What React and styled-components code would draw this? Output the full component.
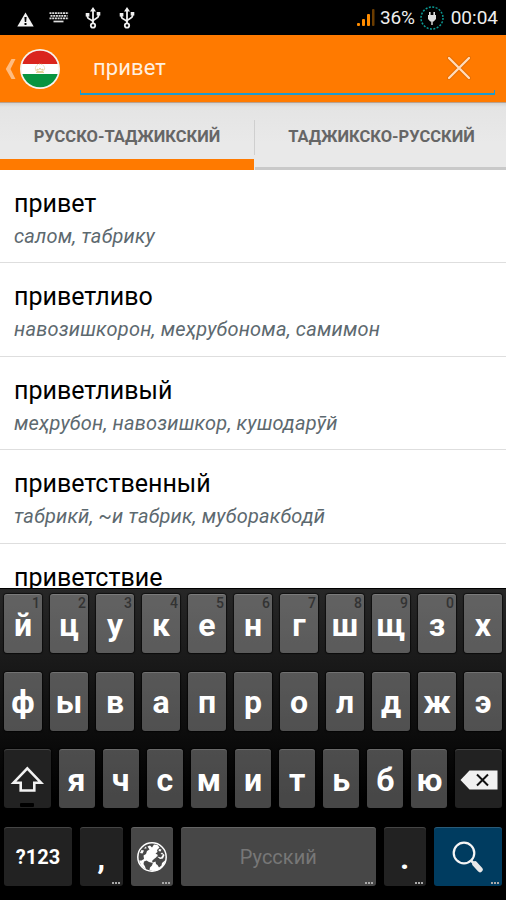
import styled, { createGlobalStyle } from "styled-components";

const GlobalStyle = createGlobalStyle`
  * {
    box-sizing: border-box;
  }

  body {
    margin: 0;
    background: #000000;
    font-family: Roboto, "Noto Sans", sans-serif;
  }
`;

const Screen = styled.div`
  display: flex;
  flex-direction: column;
  width: 506px;
  height: 900px;
  overflow: hidden;
  background: #ffffff;
`;

const StatusBar = styled.div`
  display: flex;
  align-items: center;
  flex: none;
  height: 35px;
  padding: 0 8px 0 17px;
  background: #000000;
`;

const StatusIcons = styled.div`
  display: flex;
  align-items: center;
  flex: 1;

  svg:nth-child(1) {
    margin: 3px 15px 0 0;
  }

  svg:nth-child(2) {
    margin-right: 16px;
  }

  svg:nth-child(3) {
    margin-right: 18px;
  }
`;

const Battery = styled.span`
  margin: 0 5px;
  font-size: 19px;
  line-height: 36px;
  letter-spacing: -0.2px;
  color: #eeeeee;
`;

const Clock = styled.span`
  margin-left: 7px;
  font-size: 19px;
  line-height: 36px;
  color: #eeeeee;
`;

const ActionBar = styled.div`
  display: flex;
  flex: none;
  height: 68px;
  padding: 0 11px 0 5px;
  background: #ff7a00;
  border-bottom: 1px solid #b9a08c;
`;

const UpButton = styled.div`
  display: flex;
  align-items: center;
  gap: 4px;
  width: 75px;
`;

const SearchField = styled.div`
  position: relative;
  display: flex;
  align-items: center;
  flex: 1;
  height: 60px;
  padding: 6px 24px 0 13px;
  justify-content: space-between;
`;

const Underline = styled.div`
  position: absolute;
  left: 0;
  right: 0;
  bottom: 0;
  height: 5px;
  border: 1px solid #1b9bd0;
  border-top: 0;
  border-bottom-width: 2px;
`;

const Query = styled.span`
  font-size: 22px;
  line-height: 54px;
  letter-spacing: 0.1px;
  color: #fff0e0;
`;

const Tabs = styled.div`
  display: flex;
  flex: none;
  height: 67px;
  background: linear-gradient(#d2d2d2, #e4e4e4 4px, #e9e9e9 40px);
`;

const Tab = styled.div`
  display: flex;
  align-items: center;
  justify-content: center;
  flex: ${(props) => (props.$active ? "0 0 254px" : "1")};
  padding-top: ${(props) => (props.$active ? "11px" : "3px")};
  padding-left: ${(props) => (props.$active ? "0" : "2px")};
  border-bottom: ${(props) =>
    props.$active ? "11px solid #ff7a00" : "3px solid #c9c9c9"};
  font-size: 16.5px;
  font-weight: 700;
  color: #666666;
`;

const TabDivider = styled.div`
  width: 1px;
  height: 64px;
  padding: 17px 0 12px;
  background: #cfcfcf content-box;
`;

const WordList = styled.div`
  flex: 1;
  min-height: 0;
  overflow: hidden;
`;

const WordRow = styled.div`
  height: 93.4px;
  padding: 18px 14px 0;
  border-bottom: 1px solid #dedede;
`;

const Word = styled.div`
  font-size: 25px;
  line-height: 31px;
  color: #000000;
`;

const Translation = styled.div`
  margin-top: 4.8px;
  font-size: 20px;
  line-height: 25px;
  letter-spacing: 0.2px;
  font-style: italic;
  color: #5d696f;
`;

const Keyboard = styled.div`
  display: flex;
  flex-direction: column;
  flex: none;
  gap: 18.5px;
  height: 312px;
  padding: 5px 4px 0;
  border-top: 1px solid #000000;
  background: linear-gradient(#272727, #000000 68%);
`;

const KeyRow = styled.div`
  display: flex;
  gap: 8px;
  height: 59px;
`;

const keyColors = {
  light: "rgba(255, 255, 255, 0.28)",
  dark: "#222222",
  action: "#003c60",
};

const Key = styled.div`
  position: relative;
  display: flex;
  align-items: center;
  justify-content: center;
  flex: ${(props) => (props.$width ? `0 0 ${props.$width}px` : "1 1 0")};
  min-width: 0;
  padding-top: 2px;
  border-radius: 3px;
  background: ${(props) => keyColors[props.$tone || "light"]};
  box-shadow: 0 0 1px 1px rgba(0, 0, 0, 0.6),
    inset 0 1px 0 rgba(255, 255, 255, 0.16);
  font-size: ${(props) => props.$size || 32}px;
  line-height: 28px;
  font-weight: 700;
  color: #ffffff;
`;

const Hint = styled.span`
  position: absolute;
  top: 3px;
  right: 2px;
  font-size: 14px;
  line-height: 12px;
  font-weight: 500;
  color: #333333;
`;

const More = styled.span`
  position: absolute;
  right: 3px;
  bottom: 2px;
  display: flex;
  gap: 1px;

  i {
    width: 2px;
    height: 2px;
    background: #a8a8a8;
  }
`;

const SpaceLabel = styled.span`
  font-size: 20px;
  font-weight: 400;
  color: #777777;
`;

const Punctuation = styled.span`
  padding-top: 1px;
`;

const words = [
  ["привет", "салом, табрику"],
  ["приветливо", "навозишкорон, меҳрубонома, самимон"],
  ["приветливый", "меҳрубон, навозишкор, кушодарӯй"],
  ["приветственный", "табрикӣ, ~и табрик, муборакбодӣ"],
  ["приветствие", ""],
];

const MoreDots = () => (
  <More>
    <i />
    <i />
    <i />
  </More>
);

const WarningIcon = () => (
  <svg width="17" height="15" viewBox="0 0 17 15">
    <path d="M8.5 0.5 16.7 14.5H0.3Z" fill="#f2f2f2" />
    <path d="M7.400 5h2.200l-.4 5H7.800zM7.500 11h2v2h-2z" fill="#000" />
  </svg>
);

const KeyboardIcon = () => (
  <svg width="20" height="11" viewBox="0 0 20 11">
    <g stroke="#dddddd" strokeWidth="1.7">
      <path d="M.5 1.2h19" strokeDasharray="2 .7" />
      <path d="M1.5 3.8h17" strokeDasharray="2 .7" />
      <path d="M.5 6.4h19" strokeDasharray="2 .7" />
      <path d="M4.5 9.5h10" />
    </g>
  </svg>
);

const UsbIcon = () => (
  <svg width="16" height="22" viewBox="0 0 16 22">
    <g fill="none" stroke="#f0f0f0" strokeWidth="1.8">
      <path d="M8 3v13M2.5 8v2c0 2.500 5.500 2.500 5.500 5M13.500 7v2c0 2.500-5.500 3-5.500 5.500" />
      <circle cx="8" cy="18.500" r="2.200" />
    </g>
    <path d="M8 0 11 4.500H5zM.7 6h3.700v3.500H.7zM11.700 5h3.600v3.600h-3.600z" fill="#f0f0f0" />
  </svg>
);

const SignalIcon = () => (
  <svg width="18" height="18" viewBox="0 0 18 18">
    <rect x="0" y="14" width="3" height="3" rx="1" fill="#ff8c00" />
    <rect x="5" y="10" width="3" height="7" rx="1" fill="#ff8c00" />
    <rect x="10" y="5" width="3" height="12" rx="1" fill="#ff8c00" />
    <rect x="15" y="0" width="2.500" height="17" rx="1" fill="#6b3c00" />
  </svg>
);

const PlugIcon = () => (
  <svg width="24" height="24" viewBox="0 0 24 24">
    <circle
      cx="12"
      cy="12"
      r="11"
      fill="none"
      stroke="#0b9c96"
      strokeWidth="1.500"
      strokeDasharray="2 1.450"
    />
    <path
      d="M9 6h1.600v3h2.800V6H15v3h1v4l-2.300 2.500h-1V19h-1.400v-3.500h-1L8 13V9h1z"
      fill="#dddddd"
    />
  </svg>
);

const BackIcon = () => (
  <svg width="11" height="20" viewBox="0 0 11 20">
    <path d="M6.500 0H10.500L5.500 10 10.500 20H6.500L.8 10Z" fill="#ffbc80" />
  </svg>
);

const FlagIcon = () => (
  <svg width="40" height="40" viewBox="0 0 40 40">
    <clipPath id="flag">
      <circle cx="20" cy="20" r="18.300" />
    </clipPath>
    <circle cx="20" cy="20" r="20" fill="#f7f3ef" />
    <g clipPath="url(#flag)">
      <path d="M0 0h40v15H0z" fill="#da251d" />
      <path d="M0 15h40v10H0z" fill="#ffffff" />
      <path d="M0 25h40v15H0z" fill="#079440" />
    </g>
    <path
      d="M16 23.500h8M17 22.500v-2.500l1.700 1 1.300-2 1.300 2 1.700-1v2.500z"
      fill="none"
      stroke="#dcc57f"
      strokeWidth=".8"
    />
    <path
      d="M15.800 21.500a4.600 4.600 0 1 1 8.400 0"
      fill="none"
      stroke="#dcc57f"
      strokeDasharray="1 1"
    />
  </svg>
);

const ClearIcon = () => (
  <svg width="24" height="24" viewBox="0 0 24 24">
    <path
      d="M2 2 22 22M22 2 2 22"
      stroke="#c75e00"
      strokeWidth="4"
      strokeLinecap="round"
      opacity=".45"
    />
    <path
      d="M2 2 22 22M22 2 2 22"
      stroke="#ffdcbc"
      strokeWidth="2.300"
      strokeLinecap="round"
    />
  </svg>
);

const ShiftIcon = () => (
  <svg width="46" height="57" viewBox="0 1 46 57">
    <path
      d="M23.300 18.300 37 32.700H30.300V40.500H16.700V32.700H9.600Z"
      fill="none"
      stroke="#f2f2f2"
      strokeWidth="2.600"
    />
    <rect x="16" y="53" width="14" height="4" rx="1" fill="#000" />
  </svg>
);

const GlobeIcon = () => (
  <svg width="30" height="30" viewBox="0 0 30 30">
    <circle cx="15" cy="15" r="14.200" fill="#484848" stroke="#ffffff" strokeWidth="1.500" />
    <path
      d="M10.500 4.500 13 3.500 15 5.500 17 2.500 20.500 3 22.500 5.500 20 8 20.500 10 18.500 11.500 21 13 19 15.500 17 17 15 19 16 21 12 20 9.500 18.500 7 19.500 6.500 22 8 24.500 9 27.500 4.500 24 2 18.500 4.500 18.500 7 17 6.500 13.500 9 12 10 9 12.500 7.500Z"
      fill="#ffffff"
    />
    <path
      d="M3 11 4.500 8 7 8.500 5.500 11.500ZM7 6.500 9 4.500 9.500 6.500ZM20 14.500 24 15.500 26 12.500 23.500 12 25 10.500 27.500 13 26 16.500 23 17ZM22 7 24.500 7.500 23.500 9.500 21.500 9Z"
      fill="#ffffff"
    />
    <path
      d="M16 20.500 18.500 19.500 19 22 20.500 23 22 25.500 24.500 23.500 25 21 28.500 18 26.500 23.500 21.500 28 16 29 12.500 28 13 25.500 15 23.500Z"
      fill="#ffffff"
    />
  </svg>
);

const DeleteIcon = () => (
  <svg width="38" height="20" viewBox="0 0 38 20">
    <path d="M.5 10 9.500 .5H37.500V19.500H9.500Z" fill="#f1f1f1" />
    <path d="M17 4.500 28 15.500M28 4.500 17 15.500" stroke="#111" strokeWidth="2" />
  </svg>
);

const SearchIcon = () => (
  <svg width="32" height="32" viewBox="0 0 32 32">
    <circle cx="12" cy="12" r="10.300" fill="none" stroke="#f5f5f5" strokeWidth="2.200" />
    <path d="m18.500 19 3 3" stroke="#eeeeee" strokeWidth="2.500" />
    <path
      d="m23 23 5 5.500"
      stroke="#e8e8e8"
      strokeWidth="5.500"
      strokeLinecap="round"
    />
  </svg>
);

const App = function () {
  return (
    <Screen>
      <GlobalStyle />
      <StatusBar>
        <StatusIcons>
          <WarningIcon />
          <KeyboardIcon />
          <UsbIcon />
          <UsbIcon />
        </StatusIcons>
        <SignalIcon />
        <Battery>36%</Battery>
        <PlugIcon />
        <Clock>00:04</Clock>
      </StatusBar>
      <ActionBar>
        <UpButton>
          <BackIcon />
          <FlagIcon />
        </UpButton>
        <SearchField>
          <Query>привет</Query>
          <ClearIcon />
          <Underline />
        </SearchField>
      </ActionBar>
      <Tabs>
        <Tab $active>РУССКО-ТАДЖИКСКИЙ</Tab>
        <TabDivider />
        <Tab>ТАДЖИКСКО-РУССКИЙ</Tab>
      </Tabs>
      <WordList>
        {words.map(([word, translation]) => (
          <WordRow key={word}>
            <Word>{word}</Word>
            <Translation>{translation}</Translation>
          </WordRow>
        ))}
      </WordList>
      <Keyboard>
        <KeyRow>
          {[..."йцукенгшщзх"].map((letter, i) => (
            <Key key={letter}>
              {letter}
              {i < 10 && <Hint>{(i + 1) % 10}</Hint>}
            </Key>
          ))}
        </KeyRow>
        <KeyRow>
          {[..."фывапролджэ"].map((letter) => (
            <Key key={letter}>{letter}</Key>
          ))}
        </KeyRow>
        <KeyRow>
          <Key $tone="dark" $width={46.5}>
            <ShiftIcon />
          </Key>
          {[..."ячсмитьбю"].map((letter) => (
            <Key key={letter}>{letter}</Key>
          ))}
          <Key $tone="dark" $width={46.5}>
            <DeleteIcon />
          </Key>
        </KeyRow>
        <KeyRow>
          <Key $tone="dark" $width={68} $size={20}>
            ?123
          </Key>
          <Key $tone="dark" $width={42.5}>
            <Punctuation>,</Punctuation>
            <MoreDots />
          </Key>
          <Key $width={42.5}>
            <GlobeIcon />
            <MoreDots />
          </Key>
          <Key>
            <SpaceLabel>Русский</SpaceLabel>
            <MoreDots />
          </Key>
          <Key $tone="dark" $width={42.5}>
            <Punctuation>.</Punctuation>
            <MoreDots />
          </Key>
          <Key $tone="action" $width={68}>
            <SearchIcon />
            <MoreDots />
          </Key>
        </KeyRow>
      </Keyboard>
    </Screen>
  );
};

export default App;
